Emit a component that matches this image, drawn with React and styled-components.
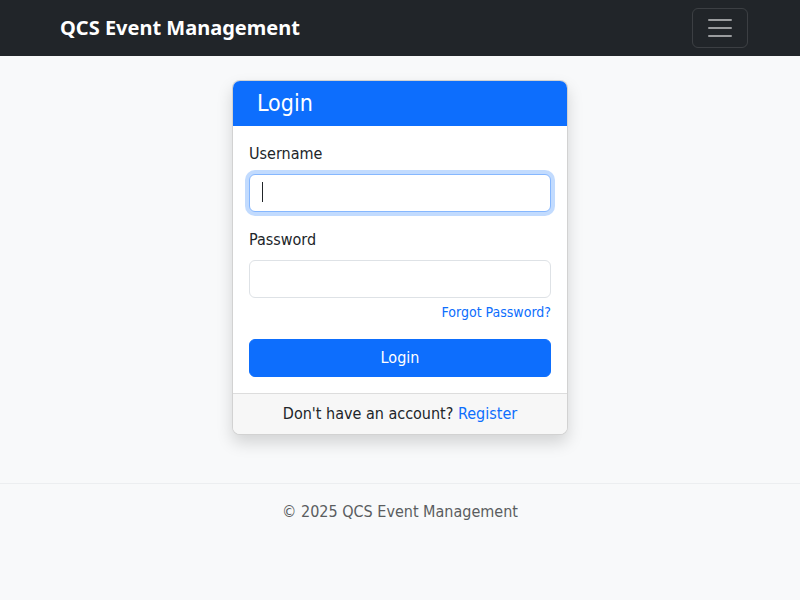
import React from "react";
import styled, { createGlobalStyle } from "styled-components";

const Global = createGlobalStyle`
  *, *::before, *::after { box-sizing: border-box; }
  body {
    margin: 0;
    background: #f8f9fa;
    color: #212529;
    font: 400 16px/24px Tahoma, "DejaVu Sans Condensed", "Noto Sans", sans-serif;
  }
`;

const Navbar = styled.nav`
  background: #212529;
  padding: 8px 0;
`;

const Container = styled.div`
  width: 100%;
  max-width: 720px;
  margin: 0 auto;
  padding: 0 12px;
`;

const NavInner = styled(Container)`
  display: flex;
  align-items: center;
  justify-content: space-between;
`;

const Brand = styled.a`
  margin-left: 8px;
  color: #fff;
  font-family: Tahoma, "Noto Sans", sans-serif;
  font-size: 20px;
  line-height: 32px;
  font-weight: 700;
  text-decoration: none;
  white-space: nowrap;
`;

const Toggler = styled.button`
  display: flex;
  padding: 4px 12px;
  background: transparent;
  border: 1px solid rgba(255, 255, 255, 0.12);
  border-radius: 6px;
  cursor: pointer;
`;

const Main = styled.main`
  padding-top: 24px;
`;

const Card = styled.section`
  width: 100%;
  max-width: 336px;
  margin: 0 auto;
  background: #fff;
  border: 1px solid rgba(0, 0, 0, 0.176);
  border-radius: 8px;
  box-shadow: 0 8px 16px rgba(0, 0, 0, 0.15);
`;

const CardHeader = styled.header`
  padding: 8px 24px;
  background: #0d6efd;
  border-radius: 7px 7px 0 0;
`;

const Title = styled.h1`
  margin: 0;
  color: #fff;
  font-size: 23px;
  line-height: 29px;
  font-weight: 400;
`;

const Form = styled.form`
  display: flex;
  flex-direction: column;
  padding: 16px;
`;

const Label = styled.label`
  margin-bottom: 8px;
`;

const InputWrap = styled.div`
  position: relative;
`;

const Input = styled.input`
  display: block;
  width: 100%;
  height: 38px;
  padding: 6px 12px;
  background: #fff;
  border: 1px solid #dee2e6;
  border-radius: 6px;
  color: #212529;
  font: inherit;

  &:focus {
    border-color: #86b7fe;
    outline: 0;
    box-shadow: 0 0 0 4px rgba(13, 110, 253, 0.25);
  }

  &:focus:placeholder-shown {
    caret-color: transparent;
  }
`;

const Caret = styled.span`
  display: none;
  position: absolute;
  top: 8px;
  left: 13px;
  width: 1px;
  height: 20px;
  background: #212529;
  pointer-events: none;

  ${Input}:focus:placeholder-shown + & {
    display: block;
  }
`;

const Field = styled.div`
  display: flex;
  flex-direction: column;
  margin-bottom: ${(p) => (p.$tight ? 4 : 16)}px;
`;

const Link = styled.a`
  color: #0d6efd;
  text-decoration: none;
`;

const ForgotLink = styled(Link)`
  align-self: flex-end;
  margin-bottom: 16px;
  font-size: 14px;
  line-height: 21px;
`;

const Submit = styled.button`
  height: 38px;
  padding: 6px 12px;
  background: #0d6efd;
  border: 1px solid #0d6efd;
  border-radius: 6px;
  color: #fff;
  font: inherit;
  cursor: pointer;
`;

const CardFooter = styled.footer`
  padding: 8px 16px;
  background: #f7f7f7;
  border-top: 1px solid rgba(0, 0, 0, 0.1);
  border-radius: 0 0 7px 7px;
  text-align: center;
`;

const PageFooter = styled.footer`
  margin-top: 48px;
  padding: 16px 0;
  border-top: 1px solid #eceef0;
  color: #5a5d60;
  text-align: center;
`;

function TextField({ id, label, tight, ...rest }) {
  return (
    <Field $tight={tight}>
      <Label htmlFor={id}>{label}</Label>
      <InputWrap>
        <Input id={id} name={id} placeholder=" " {...rest} />
        <Caret aria-hidden="true" />
      </InputWrap>
    </Field>
  );
}

export default function App() {
  return (
    <>
      <Global />
      <Navbar>
        <NavInner>
          <Brand href="#">QCS Event Management</Brand>
          <Toggler type="button" aria-label="Toggle navigation">
            <svg width="30" height="30" viewBox="0 0 30 30" fill="none" aria-hidden="true">
              <path
                stroke="rgba(255,255,255,0.55)"
                strokeLinecap="round"
                strokeMiterlimit="10"
                strokeWidth="2"
                d="M4 7h22M4 15h22M4 23h22"
              />
            </svg>
          </Toggler>
        </NavInner>
      </Navbar>
      <Main>
        <Container>
          <Card>
            <CardHeader>
              <Title>Login</Title>
            </CardHeader>
            <Form>
              <TextField id="username" label="Username" type="text" autoFocus />
              <TextField id="password" label="Password" type="password" tight />
              <ForgotLink href="#">Forgot Password?</ForgotLink>
              <Submit type="submit">Login</Submit>
            </Form>
            <CardFooter>
              Don't have an account? <Link href="#">Register</Link>
            </CardFooter>
          </Card>
        </Container>
      </Main>
      <PageFooter>© 2025 QCS Event Management</PageFooter>
    </>
  );
}
